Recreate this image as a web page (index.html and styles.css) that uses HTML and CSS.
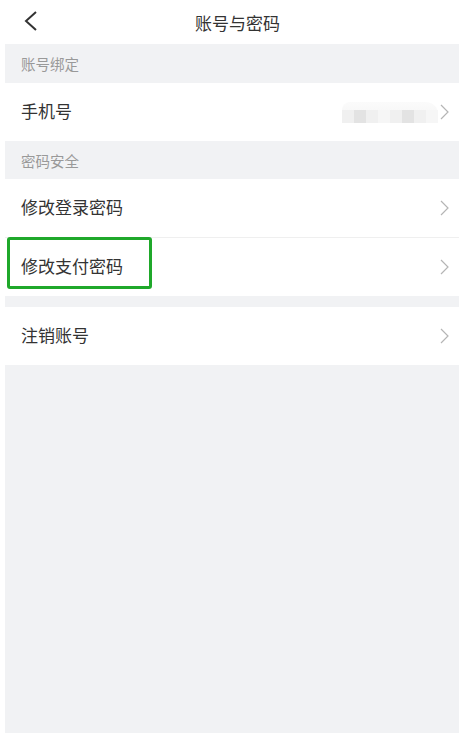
FILE: index.html
```html
<!DOCTYPE html>
<html lang="zh-CN">
<head>
  <meta charset="UTF-8" />
  <meta name="viewport" content="width=device-width, initial-scale=1.0"/>
  <title>账号与密码</title>
  <link rel="stylesheet" href="styles.css">
</head>
<body>

  <header class="topbar">
    <a class="back" href="#">
      <svg width="14" height="20" viewBox="0 0 14 20"><path d="M12 1 L2 10 L12 19" fill="none" stroke="#333" stroke-width="2"/></svg>
    </a>
    <h1>账号与密码</h1>
  </header>

  <main class="page">
    <div class="group-title first">账号绑定</div>
    <div class="row">
      <span class="label">手机号</span>
      <span class="masked">
        <i></i><i class="d"></i><i></i><i class="l"></i><i></i><i class="d"></i><i></i><i class="l"></i>
      </span>
      <svg class="arrow" width="9" height="16" viewBox="0 0 9 16"><path d="M1 1 L8 8 L1 15" fill="none" stroke="#b5b5b5" stroke-width="1.2"/></svg>
    </div>

    <div class="group-title">密码安全</div>
    <div class="row line">
      <span class="label">修改登录密码</span>
      <svg class="arrow" width="9" height="16" viewBox="0 0 9 16"><path d="M1 1 L8 8 L1 15" fill="none" stroke="#b5b5b5" stroke-width="1.2"/></svg>
    </div>
    <div class="row">
      <span class="highlight"></span>
      <span class="label">修改支付密码</span>
      <svg class="arrow" width="9" height="16" viewBox="0 0 9 16"><path d="M1 1 L8 8 L1 15" fill="none" stroke="#b5b5b5" stroke-width="1.2"/></svg>
    </div>

    <div class="gap"></div>
    <div class="row">
      <span class="label">注销账号</span>
      <svg class="arrow" width="9" height="16" viewBox="0 0 9 16"><path d="M1 1 L8 8 L1 15" fill="none" stroke="#b5b5b5" stroke-width="1.2"/></svg>
    </div>
  </main>

</body>
</html>
```

FILE: styles.css
```css
body {
  margin: 0;
  background: #ffffff;
  font-family: "Noto Sans CJK SC", "Noto Sans", sans-serif;
  color: #333;
}

.topbar {
  height: 44px;
  display: flex;
  align-items: center;
  justify-content: center;
  position: relative;
  background: #ffffff;
}

.topbar h1 {
  margin: 0;
  font-size: 17px;
  font-weight: 400;
  color: #333;
  padding-left: 12px;
}

.back {
  position: absolute;
  left: 24px;
  top: 11px;
  display: block;
  line-height: 0;
}

.page {
  margin: 0 4px 0 5px;
  background: #f1f2f4;
  height: 689px;
}

.group-title {
  height: 38px;
  display: flex;
  align-items: center;
  padding-left: 16px;
  font-size: 14.5px;
  color: #999;
}

.group-title.first {
  height: 39px;
}

.row {
  position: relative;
  height: 58px;
  background: #ffffff;
  display: flex;
  align-items: center;
  padding: 0 10px 0 16px;
}

.row.line {
  border-bottom: 1px solid #efefef;
}

.label {
  flex: 1;
  font-size: 17px;
  color: #333;
  margin-bottom: 3px;
}

.arrow {
  display: block;
}

.masked {
  display: flex;
  margin-right: 2px;
  height: 17px;
  padding-top: 4px;
  background: linear-gradient(#fbfbfb, #f4f4f4);
  border-radius: 8px 12px 0 0;
}

.masked i {
  width: 12px;
  height: 13px;
  margin-top: 4px;
  background: #f0f0f0;
}

.masked i.d {
  background: #e3e3e3;
}

.masked i.l {
  background: #f6f6f6;
}

.highlight {
  position: absolute;
  left: 2px;
  top: -1px;
  width: 139px;
  height: 46px;
  border: 3px solid #1fa82a;
  border-radius: 3px;
}

.gap {
  height: 11px;
}
```
